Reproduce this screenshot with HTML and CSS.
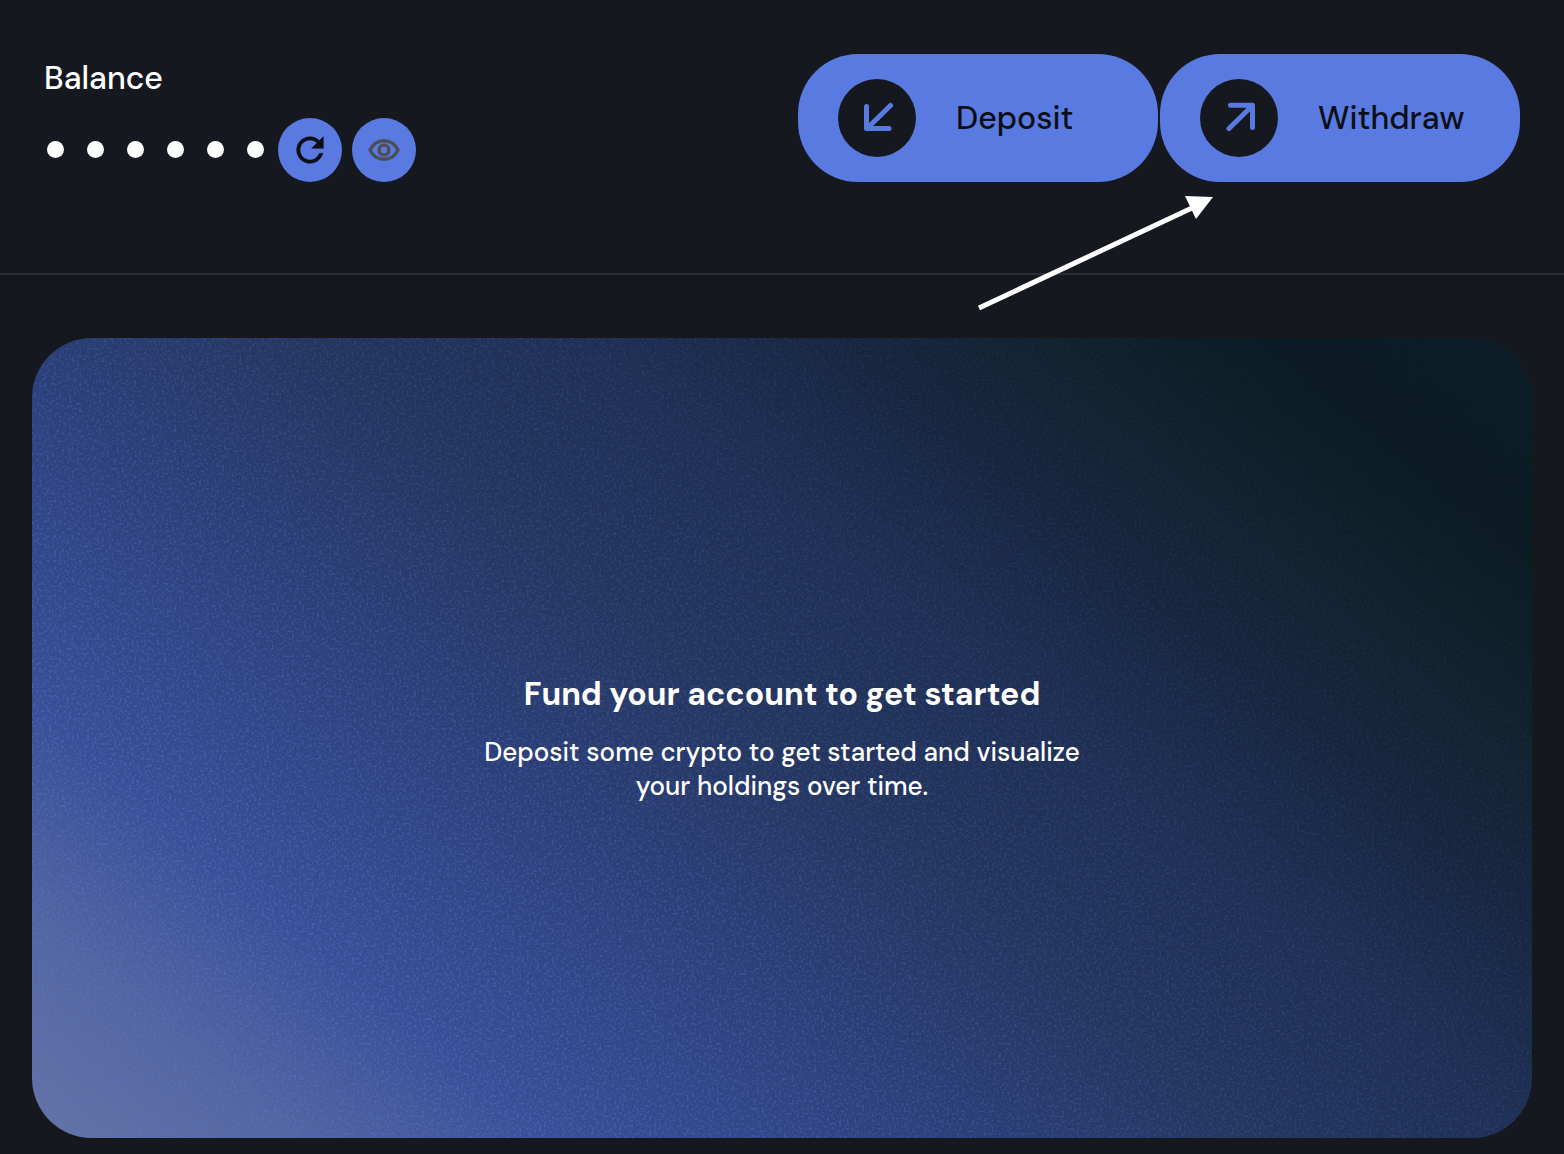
FILE: index.html
```
<!DOCTYPE html>
<html lang="en">
<head>
    <meta charset="UTF-8">
    <meta name="viewport" content="width=device-width, initial-scale=1.0">
    <title>Balance</title>
    <link rel="stylesheet" href="styles.css">
</head>
<body>
    <header class="topbar">
        <div class="balance">
            <h1>Balance</h1>
            <div class="balance-row">
                <div class="dots" role="img" aria-label="Balance hidden">
                    <span></span><span></span><span></span><span></span><span></span><span></span>
                </div>
                <button type="button" class="round-btn" aria-label="Refresh">
                    <svg width="40" height="40" viewBox="0 0 24 24"><path fill="#0d0f16" stroke="#0d0f16" stroke-width="0.3" d="M17.65 6.35A7.96 7.96 0 0 0 12 4a8 8 0 1 0 7.73 10h-2.08A6 6 0 1 1 12 6c1.66 0 3.14.69 4.22 1.78L13 11h7V4z"/></svg>
                </button>
                <button type="button" class="round-btn" aria-label="Show balance">
                    <svg width="32" height="32" viewBox="0 0 32 32" fill="none" stroke="#4c4d55" stroke-width="3.4"><path stroke-linejoin="round" d="M2 16C5 10 10 6.700 16 6.700S27 10 30 16C27 22 22 25.300 16 25.300S5 22 2 16z"/><circle cx="16" cy="16" r="4.900"/></svg>
                </button>
            </div>
        </div>
        <div class="actions">
            <button type="button" class="action-btn">
                <span class="action-icon">
                    <svg width="32" height="32" viewBox="0 0 32 32"><path d="M29.500 3.500L6 26.500M5.500 4.500v22H28"/></svg>
                </span>
                Deposit
            </button>
            <button type="button" class="action-btn">
                <span class="action-icon">
                    <svg width="32" height="32" viewBox="0 0 32 32"><path d="M6 26.500L29.500 3.500M7.500 3.300h22v22.200"/></svg>
                </span>
                Withdraw
            </button>
            <svg class="pointer" width="240" height="120" viewBox="0 0 240 120" aria-hidden="true">
                <path stroke="#fff" stroke-width="5" d="M3 112L216 12"/>
                <path fill="#fff" d="M209 0L237 1L220 23z"/>
            </svg>
        </div>
    </header>
    <main>
        <section class="fund-card">
            <svg class="grain" aria-hidden="true">
                <filter id="grain" color-interpolation-filters="sRGB">
                    <feTurbulence type="fractalNoise" baseFrequency="0.4" numOctaves="2" seed="4"/>
                    <feColorMatrix values="0 0 0 0 0.34  0 0 0 0 0.46  0 0 0 0 0.85  4.5 0 0 0 -2.2"/>
                </filter>
                <rect width="100%" height="100%" filter="url(#grain)"/>
            </svg>
            <h2>Fund your account to get started</h2>
            <p>Deposit some crypto to get started and visualize your holdings over time.</p>
        </section>
    </main>
</body>
</html>
```
FILE: styles.css
```
* {
    box-sizing: border-box;
}
body {
    margin: 0;
    background-color: #15181f;
    color: #ffffff;
    font-family: "DM Sans", Inter, sans-serif;
}
.topbar {
    display: flex;
    justify-content: space-between;
    align-items: flex-start;
    padding: 54px 44px 91px;
    border-bottom: 2px solid #2c2d31;
}
h1 {
    margin: 4px 0 20px;
    font-size: 32px;
    line-height: 40px;
    font-weight: 500;
}
.balance-row {
    display: flex;
    align-items: center;
    gap: 10px;
}
.dots {
    display: flex;
    gap: 23px;
    padding: 0 4px 1px 3px;
}
.dots span {
    width: 17px;
    height: 17px;
    border-radius: 50%;
    background-color: #ffffff;
}
button {
    border: none;
    font-family: inherit;
    cursor: pointer;
    background-color: #597ae0;
    color: #0d0f16;
}
.round-btn {
    display: flex;
    align-items: center;
    justify-content: center;
    width: 64px;
    height: 64px;
    padding: 0;
    border-radius: 50%;
}
.actions {
    position: relative;
    display: flex;
    gap: 2px;
}
.action-btn {
    display: flex;
    align-items: center;
    gap: 40px;
    width: 360px;
    height: 128px;
    padding: 0 40px;
    border-radius: 60px;
    font-size: 32px;
    font-weight: 500;
}
.action-icon {
    display: flex;
    align-items: center;
    justify-content: center;
    width: 78px;
    height: 78px;
    border-radius: 50%;
    background-color: #15181f;
}
.action-icon path {
    fill: none;
    stroke: #597ae0;
    stroke-width: 5;
    stroke-linecap: round;
    stroke-linejoin: round;
}
/* arrow towards the withdraw button */
.pointer {
    position: absolute;
    top: 142px;
    right: 304px;
    pointer-events: none;
}
main {
    padding: 63px 32px 16px;
}
.fund-card {
    position: relative;
    display: flex;
    flex-direction: column;
    align-items: center;
    justify-content: center;
    min-height: 800px;
    padding-top: 1px;
    border-radius: 60px;
    overflow: hidden;
    text-align: center;
    background: linear-gradient(40deg, #6675a4 0%, #53659f 11%, #394f96 21%, #2c4078 37%, #25365f 49%, #1f3054 61%, #17263e 72%, #11222d 81%, #0b1a22 90%, #0d1d27 100%);
}
/* grain is strongest in the bright corner */
.grain {
    position: absolute;
    inset: 0;
    width: 100%;
    height: 100%;
    opacity: 0.4;
    mask-image: linear-gradient(40deg, #000 20%, rgba(0, 0, 0, 0.5) 50%, rgba(0, 0, 0, 0.1) 85%);
}
.fund-card h2 {
    position: relative;
    margin: 0 0 21px;
    font-size: 32px;
    line-height: 40px;
    font-weight: 700;
}
.fund-card p {
    position: relative;
    max-width: 640px;
    margin: 0;
    font-size: 26px;
    line-height: 34px;
    font-weight: 500;
}
```
